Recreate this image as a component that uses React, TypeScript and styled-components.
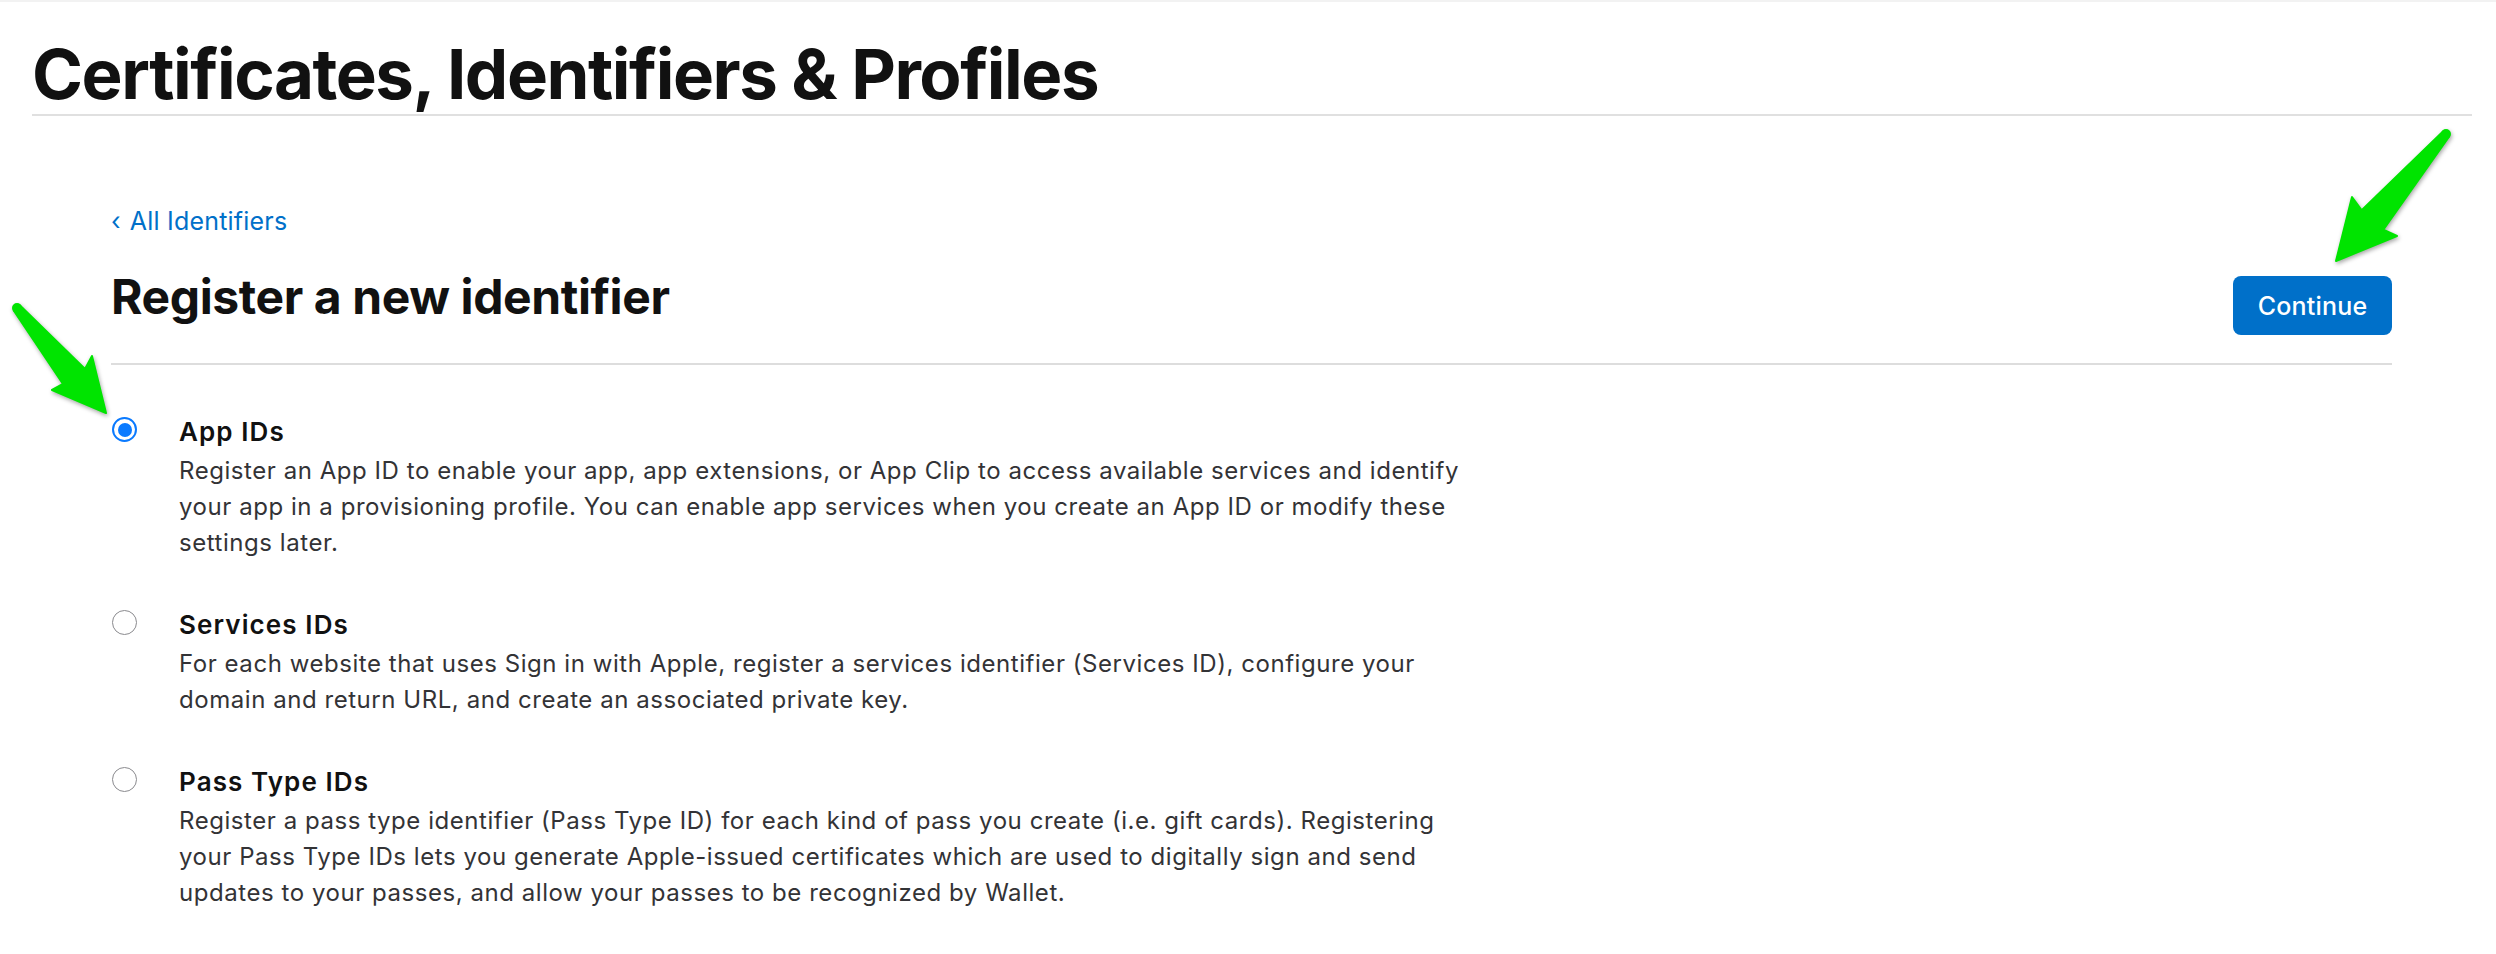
import React from "react";
import styled, { createGlobalStyle } from "styled-components";

const Global = createGlobalStyle`
  * { box-sizing: border-box; }
  html, body { margin: 0; padding: 0; background: #ffffff; }
  body {
    font-family: Inter, "Noto Sans", "Liberation Sans", sans-serif;
    color: #1d1d1f;
    -webkit-font-smoothing: antialiased;
  }
`;

const Page = styled.div`
  position: relative;
  width: 2496px;
  min-height: 954px;
  border-top: 2px solid #f2f2f2;
  overflow: hidden;
`;

const Header = styled.header`
  margin: 0 24px 0 32px;
  padding-top: 32px;
  border-bottom: 2px solid #e0e0e0;
`;

const PageTitle = styled.h1`
  margin: 0;
  font-size: 69px;
  line-height: 80px;
  font-weight: 700;
  letter-spacing: -1.45px;
  color: #111111;
`;

const Content = styled.main`
  padding: 0 104px 0 111px;
`;

const BackLink = styled.a`
  display: inline-block;
  margin-top: 89px;
  font-size: 25px;
  line-height: 32px;
  color: #0070c9;
  text-decoration: none;
  letter-spacing: 0.2px;
`;

const Chevron = styled.span`
  display: inline-block;
  margin-right: 9px;
`;

const TopRow = styled.div`
  display: flex;
  justify-content: space-between;
  align-items: flex-start;
  padding-top: 32px;
  padding-bottom: 28px;
  border-bottom: 2px solid #dddddd;
`;

const Heading = styled.h2`
  margin: 0;
  font-size: 48px;
  line-height: 56px;
  font-weight: 700;
  letter-spacing: -0.4px;
  color: #111111;
`;

const PrimaryButton = styled.button`
  margin-top: 7px;
  width: 159px;
  height: 59px;
  border: none;
  border-radius: 8px;
  background: #0070c9;
  color: #ffffff;
  font-family: Inter, "Noto Sans", sans-serif;
  font-size: 25px;
  font-weight: 500;
  letter-spacing: 0.2px;
  cursor: pointer;
`;

const OptionList = styled.div`
  display: flex;
  flex-direction: column;
  gap: 46px;
  padding-top: 49px;
`;

const Option = styled.label`
  display: grid;
  grid-template-columns: 68px 1fr;
  align-items: start;
`;

const Radio = styled.span<{ $checked?: boolean }>`
  margin-top: 3px;
  margin-left: 1px;
  width: 25px;
  height: 25px;
  border-radius: 50%;
  border: ${(p) => (p.$checked ? "2.5px solid #0a7aff" : "1.5px solid #8a8a8e")};
  display: flex;
  align-items: center;
  justify-content: center;
  background: #ffffff;
  &::after {
    content: "";
    display: ${(p) => (p.$checked ? "block" : "none")};
    width: 14px;
    height: 14px;
    border-radius: 50%;
    background: #0a7aff;
  }
`;

const OptionBody = styled.div`
  display: flex;
  flex-direction: column;
  gap: 3px;
`;

const OptionTitle = styled.div`
  font-size: 26px;
  line-height: 36px;
  font-weight: 600;
  color: #111111;
  letter-spacing: 1.1px;
`;

const OptionText = styled.p`
  margin: 0;
  font-size: 24px;
  line-height: 36px;
  color: #333336;
  letter-spacing: 0.55px;
  white-space: nowrap;
`;

const ArrowSvg = styled.svg`
  position: absolute;
  top: 0;
  left: 0;
  pointer-events: none;
  filter: drop-shadow(1px 2px 2px rgba(0, 0, 0, 0.35));
`;

const options = [
  {
    title: "App IDs",
    checked: true,
    lines: [
      "Register an App ID to enable your app, app extensions, or App Clip to access available services and identify",
      "your app in a provisioning profile. You can enable app services when you create an App ID or modify these",
      "settings later.",
    ],
  },
  {
    title: "Services IDs",
    checked: false,
    lines: [
      "For each website that uses Sign in with Apple, register a services identifier (Services ID), configure your",
      "domain and return URL, and create an associated private key.",
    ],
  },
  {
    title: "Pass Type IDs",
    checked: false,
    lines: [
      "Register a pass type identifier (Pass Type ID) for each kind of pass you create (i.e. gift cards). Registering",
      "your Pass Type IDs lets you generate Apple-issued certificates which are used to digitally sign and send",
      "updates to your passes, and allow your passes to be recognized by Wallet.",
    ],
  },
];

function Arrows() {
  return (
    <ArrowSvg width={2496} height={954} viewBox="0 0 2496 954">
      <g fill="#00e400" stroke="#00e400" strokeWidth={2} strokeLinejoin="round">
        <polygon points="13.9,308.6 63,382 52,388 106,411 92,354 85,367 20,303.4" />
        <circle cx={17} cy={306} r={4} />
        <polygon points="2443,129.4 2361.7,208.3 2352,195 2336,259 2397,234 2383.3,227.7 2449,134.6" />
        <circle cx={2446} cy={132} r={4} />
      </g>
    </ArrowSvg>
  );
}

export default function App() {
  return (
    <>
      <Global />
      <Page>
        <Header>
          <PageTitle>Certificates, Identifiers &amp; Profiles</PageTitle>
        </Header>
        <Content>
          <BackLink href="#">
            <Chevron>‹</Chevron>All Identifiers
          </BackLink>
          <TopRow>
            <Heading>Register a new identifier</Heading>
            <PrimaryButton>Continue</PrimaryButton>
          </TopRow>
          <OptionList>
            {options.map((o) => (
              <Option key={o.title}>
                <Radio $checked={o.checked} />
                <OptionBody>
                  <OptionTitle>{o.title}</OptionTitle>
                  <OptionText>
                    {o.lines.map((l, i) => (
                      <React.Fragment key={i}>
                        {l}
                        {i < o.lines.length - 1 && <br />}
                      </React.Fragment>
                    ))}
                  </OptionText>
                </OptionBody>
              </Option>
            ))}
          </OptionList>
        </Content>
        <Arrows />
      </Page>
    </>
  );
}
